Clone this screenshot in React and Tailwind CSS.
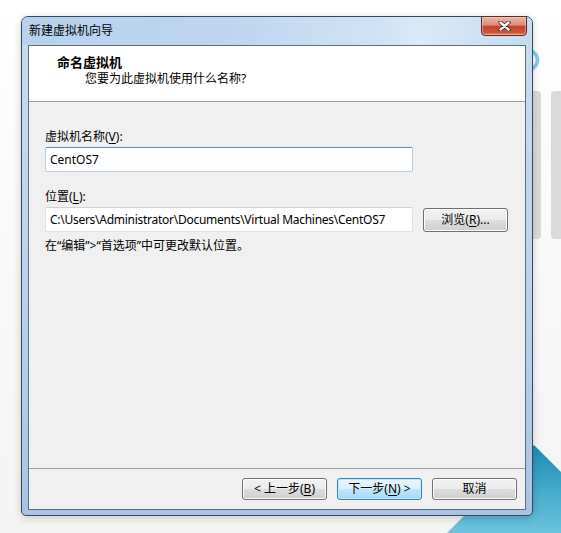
import React from 'react';

function Key({ children }) {
  return <span className="underline underline-offset-[2px] decoration-1">{children}</span>;
}

function WinButton({ children, primary, className = '' }) {
  return (
    <button
      className={`flex h-[22px] w-[85px] items-center justify-center rounded-[3px] border text-[12px] leading-none text-black ${
        primary
          ? 'border-[#3c7fb1] bg-[linear-gradient(180deg,#eaf6fd_0%,#d9f0fc_50%,#bee6fd_50%,#a7d9f5_100%)] shadow-[inset_0_0_0_1px_#c0eafd]'
          : 'border-[#707070] bg-[linear-gradient(180deg,#f2f2f2_0%,#ebebeb_50%,#dddddd_50%,#cfcfcf_100%)] shadow-[inset_0_0_0_1px_#fcfcfc]'
      } ${className}`}
    >
      {children}
    </button>
  );
}

export default function App() {
  return (
    <div className="relative h-[533px] w-[561px] overflow-hidden bg-[linear-gradient(180deg,#ffffff_0%,#f8f8f8_50%,#f4f4f4_100%)] font-['Noto_Sans','Noto_Sans_CJK_SC',sans-serif] text-[12px] text-black">
      {/* desktop behind the dialog */}
      <svg className="absolute left-0 top-0" width="561" height="533">
        <defs>
          <linearGradient id="teal" x1="0" y1="0" x2="0" y2="1">
            <stop offset="0" stopColor="#1b8db5" />
            <stop offset="1" stopColor="#6cc4dd" />
          </linearGradient>
        </defs>
        <circle cx="528" cy="60" r="9.5" fill="none" stroke="#7dcfe9" strokeWidth="3.5" />
        <rect x="524" y="91" width="17" height="148" rx="4" fill="#dadada" />
        <rect x="551" y="91" width="20" height="148" rx="4" fill="#dadada" />
        <polygon points="534,445 561,472 561,533 447,533" fill="url(#teal)" />
      </svg>

      {/* dialog window */}
      <div className="relative ml-[21px] mt-[16px] flex h-[500px] w-[512px] flex-col rounded-t-[7px] rounded-b-[5px] border border-[#3b4756] bg-[linear-gradient(180deg,#c6dcf2_0%,#bcd6f0_45%,#a8c4e2_100%)] shadow-[0_2px_8px_rgba(0,0,0,0.18)]">
        {/* title bar */}
        <div className="flex h-[28px] items-start justify-between rounded-t-[6px] bg-[linear-gradient(100deg,#b6d2ef_0%,#bcd6f1_40%,#cfe3f7_70%,#d9e9f8_78%,#c4dbf2_100%)]">
          <span className="pl-[7px] pt-[6px] text-[12px] leading-[16px] text-black">新建虚拟机向导</span>
          <div className="mr-[5px] -mt-px flex h-[20px] w-[46px] items-center justify-center rounded-b-[4px] border border-[#5e2a20] bg-[linear-gradient(180deg,#ebb3a5_0%,#dc8d7b_45%,#c8452c_52%,#cc5238_85%,#e08a6c_100%)] shadow-[inset_0_0_0_1px_rgba(255,220,210,0.45)]">
            <svg width="13" height="10" viewBox="0 0 13 10">
              <path d="M2.5 1.5 L10.5 8.5 M10.5 1.5 L2.5 8.5" stroke="#4a2a26" strokeWidth="4.2" strokeLinecap="round" />
              <path d="M2.5 1.5 L10.5 8.5 M10.5 1.5 L2.5 8.5" stroke="#ffffff" strokeWidth="2.4" strokeLinecap="round" />
            </svg>
          </div>
        </div>

        {/* client area */}
        <div className="mx-[6px] mb-[5px] flex flex-1 flex-col border border-[#5f6f80] bg-[#f0f0f0]">
          {/* header */}
          <div className="h-[56px] border-b border-[#a0a0a0] bg-white">
            <div className="pl-[28px] pt-[8px] text-[13px] font-bold leading-[16px]">命名虚拟机</div>
            <div className="mt-[1px] pl-[56px] text-[12px] leading-[16px]">您要为此虚拟机使用什么名称?</div>
          </div>

          {/* body */}
          <div className="flex-1 pl-[16px] pt-[27px]">
            <div className="leading-[16px]">
              虚拟机名称(<Key>V</Key>):
            </div>
            <div className="mt-[2px] flex h-[25px] w-[368px] items-center rounded-[2px] border border-[#b5cfe7] border-t-[#5b8fbf] bg-white pl-[4px] leading-none">
              CentOS7
            </div>

            <div className="mt-[17px] leading-[16px]">
              位置(<Key>L</Key>):
            </div>
            <div className="mt-[2px] flex items-center">
              <div className="flex h-[25px] w-[368px] items-center rounded-[2px] border border-[#e2e3ea] border-t-[#cfd3d8] bg-white pl-[4px] leading-none tracking-[-0.27px]">
                C:\Users\Administrator\Documents\Virtual Machines\CentOS7
              </div>
              <WinButton className="ml-[10px] h-[24px]">
                浏览(<Key>R</Key>)...
              </WinButton>
            </div>

            <div className="mt-[6px] leading-[16px]">在“编辑”&gt;“首选项”中可更改默认位置。</div>
          </div>

          {/* footer */}
          <div className="flex h-[41px] justify-end gap-[10px] border-t border-[#a0a0a0] pr-[8px] pt-[9px]">
            <WinButton>
              &lt; 上一步(<Key>B</Key>)
            </WinButton>
            <WinButton primary>
              下一步(<Key>N</Key>) &gt;
            </WinButton>
            <WinButton>取消</WinButton>
          </div>
        </div>
      </div>
    </div>
  );
}
